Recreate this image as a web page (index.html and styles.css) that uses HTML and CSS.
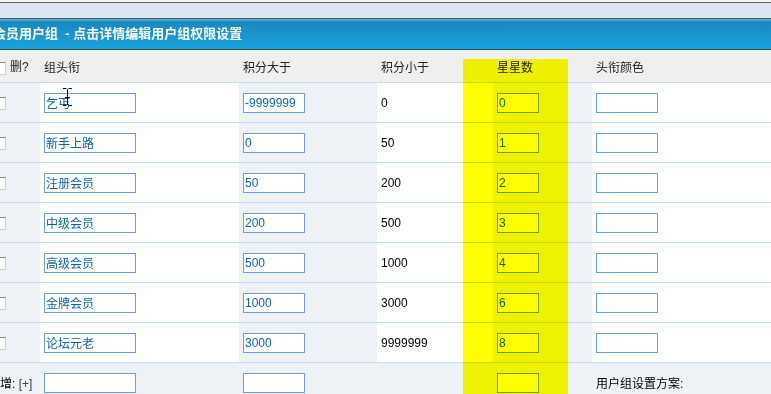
FILE: index.html
```html
<!DOCTYPE html>
<html lang="zh-CN">
<head>
    <meta charset="UTF-8">
    <title>会员用户组</title>
    <link rel="stylesheet" href="styles.css">
</head>
<body>
    <div class="page">
        <div class="topbar"></div>
        <div class="title">会员用户组 &nbsp;- 点击详情编辑用户组权限设置</div>
        <div class="grid-wrap">
            <table class="groups">
                <colgroup>
                    <col class="c1"><col class="c2"><col class="c3"><col class="c4"><col class="c5"><col class="c6">
                </colgroup>
                <tr class="head">
                    <td class="del"><span class="cb"></span>删?</td>
                    <td>组头衔</td>
                    <td>积分大于</td>
                    <td>积分小于</td>
                    <td>星星数</td>
                    <td>头衔颜色</td>
                </tr>
                <tr>
                    <td class="del"><span class="cb"></span></td>
                    <td><input class="in-name" type="text" value="乞丐"></td>
                    <td><input class="in-num" type="text" value="-9999999"></td>
                    <td>0</td>
                    <td><input class="in-star" type="text" value="0"></td>
                    <td><input class="in-color" type="text" value=""></td>
                </tr>
                <tr>
                    <td class="del"><span class="cb"></span></td>
                    <td><input class="in-name" type="text" value="新手上路"></td>
                    <td><input class="in-num" type="text" value="0"></td>
                    <td>50</td>
                    <td><input class="in-star" type="text" value="1"></td>
                    <td><input class="in-color" type="text" value=""></td>
                </tr>
                <tr>
                    <td class="del"><span class="cb"></span></td>
                    <td><input class="in-name" type="text" value="注册会员"></td>
                    <td><input class="in-num" type="text" value="50"></td>
                    <td>200</td>
                    <td><input class="in-star" type="text" value="2"></td>
                    <td><input class="in-color" type="text" value=""></td>
                </tr>
                <tr>
                    <td class="del"><span class="cb"></span></td>
                    <td><input class="in-name" type="text" value="中级会员"></td>
                    <td><input class="in-num" type="text" value="200"></td>
                    <td>500</td>
                    <td><input class="in-star" type="text" value="3"></td>
                    <td><input class="in-color" type="text" value=""></td>
                </tr>
                <tr>
                    <td class="del"><span class="cb"></span></td>
                    <td><input class="in-name" type="text" value="高级会员"></td>
                    <td><input class="in-num" type="text" value="500"></td>
                    <td>1000</td>
                    <td><input class="in-star" type="text" value="4"></td>
                    <td><input class="in-color" type="text" value=""></td>
                </tr>
                <tr>
                    <td class="del"><span class="cb"></span></td>
                    <td><input class="in-name" type="text" value="金牌会员"></td>
                    <td><input class="in-num" type="text" value="1000"></td>
                    <td>3000</td>
                    <td><input class="in-star" type="text" value="6"></td>
                    <td><input class="in-color" type="text" value=""></td>
                </tr>
                <tr>
                    <td class="del"><span class="cb"></span></td>
                    <td><input class="in-name" type="text" value="论坛元老"></td>
                    <td><input class="in-num" type="text" value="3000"></td>
                    <td>9999999</td>
                    <td><input class="in-star" type="text" value="8"></td>
                    <td><input class="in-color" type="text" value=""></td>
                </tr>
                <tr class="new-row">
                    <td class="add">新增: <span class="plus">[+]</span></td>
                    <td><input class="in-name" type="text" value=""></td>
                    <td><input class="in-num" type="text" value=""></td>
                    <td></td>
                    <td><input class="in-star" type="text" value=""></td>
                    <td>用户组设置方案:</td>
                </tr>
            </table>
            <div class="highlight"></div>
            <svg class="ibeam" width="11" height="20" viewBox="0 0 11 20">
                <path d="M1 1.5h3.5M6.5 1.5h3.5M5.5 2v16M1 18.5h3.5M6.5 18.5h3.5M3 10.5h5" stroke="#000" stroke-width="1" fill="none"/>
            </svg>
        </div>
    </div>
</body>
</html>
```

FILE: styles.css
```css
body {
    margin: 0;
    padding: 0;
    background-color: #f3f3f3;
    font-family: "Liberation Sans", "Noto Sans CJK SC", sans-serif;
    font-size: 12px;
    color: #111;
    overflow: hidden;
}
.page {
    margin-left: -12px;
    width: 783px;
    padding-top: 2px;
}
.topbar {
    height: 15px;
    background-color: #dce6f3;
    border-top: 1px solid #5c6856;
    border-bottom: 1px solid #4d5a48;
}
.title {
    height: 30px;
    line-height: 30px;
    padding-left: 5px;
    color: #fff;
    font-weight: bold;
    font-size: 13px;
    background: linear-gradient(#62b8df 0, #1a87bf 3px, #1996cf 55%, #17a4df 100%);
    border-bottom: 1px solid #2f4a33;
}
.grid-wrap {
    position: relative;
}
.groups {
    width: 783px;
    border-collapse: collapse;
    table-layout: fixed;
}
.c1 { width: 52px; }
.c2 { width: 199px; }
.c3 { width: 138px; }
.c4 { width: 116px; }
.c5 { width: 99px; }
.c6 { width: 179px; }
.groups td {
    height: 39px;
    padding: 0 0 0 4px;
    border-bottom: 1px solid #c4dcef;
    vertical-align: middle;
    white-space: nowrap;
    background-color: #fff;
    color: #000;
}
.groups td:nth-child(odd) {
    background-color: #eef2f7;
}
.groups .head td {
    height: 32px;
    background-color: #efefef;
    color: #222;
}
.groups .new-row td {
    background-color: #eef2f7;
    border-bottom: none;
}
.groups td.del {
    padding-left: 5px;
}
.groups td.add {
    padding-left: 0;
}
.plus {
    color: #444;
}
.cb {
    display: inline-block;
    width: 13px;
    height: 13px;
    box-sizing: border-box;
    border: 1px solid;
    border-color: #8c8c8c #d4d0c8 #d4d0c8 #8c8c8c;
    background-color: #fff;
    vertical-align: middle;
    margin-right: 4px;
}
.groups input {
    box-sizing: border-box;
    height: 20px;
    padding: 0 0 0 1px;
    margin: 0;
    border: 1px solid #6f9dd6;
    background-color: #fff;
    color: #0f62a6;
    font-family: "Liberation Sans", "Noto Sans CJK SC", sans-serif;
    font-size: 12px;
    vertical-align: middle;
    outline: none;
}
.in-name { width: 92px; }
.in-num { width: 62px; }
.in-star { width: 42px; }
.in-color { width: 62px; }
.highlight {
    position: absolute;
    left: 475px;
    top: 9px;
    width: 105px;
    height: 400px;
    background-color: #ffff00;
    mix-blend-mode: multiply;
    pointer-events: none;
}
.ibeam {
    position: absolute;
    left: 74px;
    top: 37px;
}
```
